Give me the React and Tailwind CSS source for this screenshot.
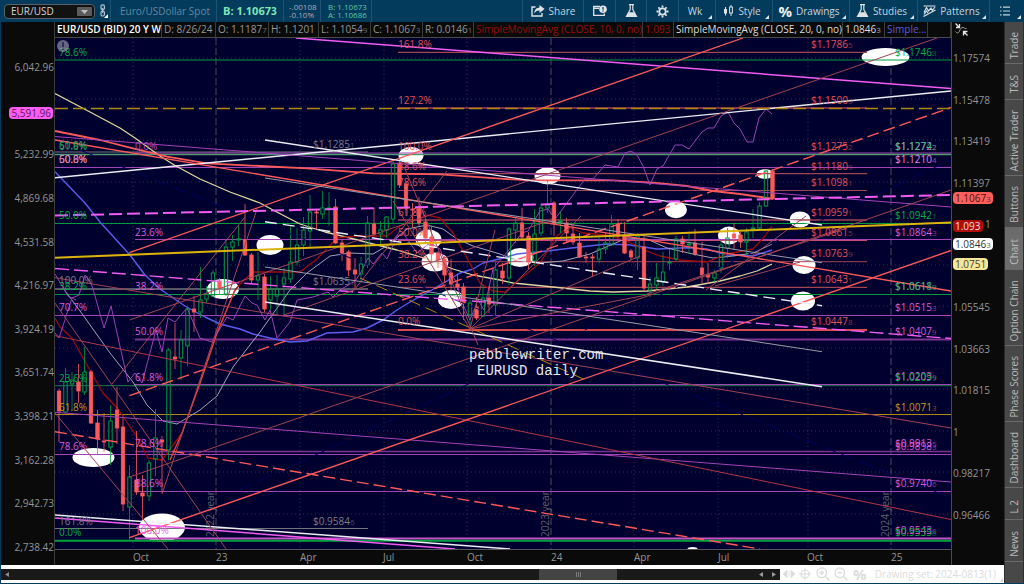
import React, { useState } from 'react';
import clsx from 'clsx';

const C = {
    mag: '#f25cf2',
    purple: '#a343b8',
    red: '#fb5a5a',
    dimRed: '#a04454',
    green: '#009a3c',
    gray: '#74747c',
    gold: '#b08a10',
    white: '#ececf4',
    navy: '#00005c',
};

// label colors, a bit brighter than the lines they belong to
const T = {
    green: '#00b040',
    mag: '#da5cde',
    red: '#e05258',
    gold: '#c09a18',
    gray: '#7c7c84',
    pink: '#ea84ea',
};

const DOT_ROWS = [58, 99, 140, 182, 223, 265, 306, 348, 389, 431, 472, 514];
const DOT_COLS = [133, 300, 384, 467, 634, 718, 808];
const YEAR_COLS = [
    { x: 216, label: '2022 year' },
    { x: 551, label: '2023 year' },
    { x: 891, label: '2024 year' },
];

// [y, x1, x2, color, width]
const LEVELS = [
    [60, 55, 951, C.green, 1],
    [152, 55, 368, C.gray, 1],
    [153, 135, 951, C.purple, 1],
    [154.5, 55, 951, '#4f9a70', 1.6],
    [167.5, 55, 951, C.purple, 1],
    [223.5, 55, 951, C.green, 1],
    [239.5, 135, 951, C.purple, 1.2],
    [289, 55, 368, C.gray, 1.4],
    [294.5, 55, 951, C.green, 1.2],
    [315.5, 55, 951, C.purple, 1],
    [339.5, 135, 951, '#7a3490', 2],
    [384.5, 135, 951, C.purple, 1],
    [385.7, 55, 951, '#1c7a4c', 1],
    [414.5, 55, 951, C.gold, 1],
    [451.5, 135, 951, '#7a3490', 1.5],
    [454.5, 55, 951, C.purple, 1],
    [491.5, 135, 951, C.purple, 1],
    [528.5, 55, 368, C.gray, 1],
    [538.5, 135, 951, '#c850cc', 2],
    [540.7, 55, 951, '#00a03c', 2],
    [52.3, 398, 867, C.dimRed, 1.2],
    [108, 398, 867, C.red, 1],
    [173.7, 398, 867, C.dimRed, 1.2],
    [190.5, 398, 867, C.dimRed, 1],
    [220, 398, 867, C.dimRed, 1.6],
    [240.5, 398, 867, '#c84a70', 1],
    [261.7, 398, 867, C.dimRed, 1],
    [287.3, 398, 867, C.dimRed, 1.2],
    [330, 398, 867, '#d84c50', 2],
];

// [x1, y1, x2, y2, color, width, dash]
const TRENDS = [
    [80, 150, 951, 498, C.navy, 1, '14 6'],
    [240, 490, 951, 160, C.navy, 1, '14 6'],
    [296, 38, 951, 88.5, C.mag, 1.5],
    [55, 177.7, 951, 91, C.white, 1.4],
    [129.5, 252.7, 743, 38, C.red, 1.3],
    [55, 140, 951, 291, C.red, 1.4],
    [55, 136.5, 951, 207, C.purple, 1],
    [55, 412.3, 951, 482, C.purple, 1],
    [55, 268.5, 951, 338.5, C.mag, 1.4, '14 5'],
    [55, 335.7, 951, 519.5, '#b03848', 1],
    [55, 277.7, 951, 428, C.dimRed, 1],
    [129.5, 395.7, 951, 107.5, C.red, 1.4, '12 5'],
    [55, 431.7, 760, 549, C.red, 1.4, '12 5'],
    [129.5, 537.7, 951, 250.5, C.red, 1.4],
    [129.5, 477, 951, 190, C.dimRed, 1],
    [129.5, 320, 937, 38, C.dimRed, 1],
    [284, 315, 545, 222, C.dimRed, 1],
    [265, 140, 822, 225, C.white, 1.3],
    [265, 221.7, 822, 305.7, C.white, 1.4, '12 6'],
    [265, 302, 822, 386.7, C.white, 1.5],
    [265, 178, 822, 262.7, '#9a9aaa', 1],
    [265, 267, 822, 351.7, '#9a9aaa', 1],
    [55, 515, 510, 549, C.white, 1.5],
    [55, 518, 455, 549, C.mag, 1.5],
    [360, 278, 590, 382, C.gold, 1, '12 6'],
    [55, 303, 226, 549, C.dimRed, 1],
    [55, 413, 168, 549, C.dimRed, 1],
    [112, 384, 245, 217, C.dimRed, 1],
    [162, 494, 257, 209, C.dimRed, 1],
    [355, 289, 447, 171, C.dimRed, 1],
    [405, 169, 478, 345, C.dimRed, 1],
    [393, 201, 470, 329, C.dimRed, 1],
    [470, 329, 495, 230, C.dimRed, 1],
    [470, 329, 581, 216, C.dimRed, 1],
    [470, 329, 640, 256, C.dimRed, 1],
    [470, 329, 652, 294, C.dimRed, 1],
    [647, 294, 847, 228, C.dimRed, 1],
    [706, 290, 806, 216, C.dimRed, 1],
    [715, 286, 800, 262, C.dimRed, 1],
    [55, 108.5, 951, 108.5, C.gold, 1.4, '13 5'],
    [55, 215.5, 951, 195, C.mag, 2, '13 5'],
    [55, 257.7, 951, 222.5, '#dcb40c', 2],
];

const CURVES = [
    { color: '#e0d6a0', width: 1.3, points: '55,93.5 90,112 120,128 135,138 160,156 175,165.5 200,179 230,192 260,203 273,210 300,224 325,232 350,238 373,244 397,250 427,259 453,269 473,275 500,280 513,283 553,287 590,291 613,292 647,291 687,287 720,281 740,276 757,271 772,264' },
    { color: '#5c5cec', width: 1.4, points: '55,171.7 85,203 100,222 130,255 145,275 160,289 185,306 205,317 220,324 240,329 253,334 270,338 290,342 307,341 327,333 353,332 367,328 383,320 397,310 410,302 430,291 447,281 460,273 473,269 483,263 500,258.7 517,254 547,251 580,247 607,244 630,245 657,249 687,247.7 707,249 727,255 740,255 753,256 772,250' },
    { color: '#fb5a5a', width: 1.8, points: '55,131 100,140 133,148.3 167,156.7 207,163.3 260,166 307,168.3 373,173.3 440,174.3 500,178.7 530,180.3 613,180.3 653,182.7 687,186 713,191 740,194 772,198.7' },
    { color: '#a3a3b5', width: 1, points: '63,288 83,315 110,353 133,382 147,405 163,421 177,424 200,410 217,396 233,367 260,332 290,290 307,273 330,256 350,253 373,254 390,244 407,229 427,225 443,229 457,239 473,246 500,254 513,259 540,263 563,261 590,254 613,244 627,238 647,239 667,248 693,254 713,258 733,256 753,253 772,244' },
    { color: '#9c0c0c', width: 1.3, points: '55,318 60,327 72,338 83,358 103,393 118,409 137,437 148,458 162,460 182,433 200,383 217,333 235,290 243,281 253,272 300,272 317,259 337,238 357,236 387,236 400,226 427,215 440,218 453,233 467,258 480,283 493,291 505,292 520,279 540,263 557,236 568,227 583,233 607,235 627,241 647,251 660,256 680,260 707,262 727,254 753,249 765,236 772,226' },
    { color: '#e04444', width: 1.3, points: '170,460 182,433 200,383 217,333 235,290' },
    { color: '#9c40b4', width: 1, points: '55,274 68,296 76,300' },
    { color: '#9c40b4', width: 1, points: '55,333 59,338 72,298 79,295 85,275 91,283 95,296 104,328 111,306 128,382 135,373 142,383 156,330 162,352 168,318 175,322 187,308 200,338 212,342 227,317 233,320 245,296 252,303 257,305 265,320 270,310 277,338 290,322 297,300 313,297 328,292 333,297 340,290 355,281 360,274 368,258 373,264 382,253 387,259 397,236 403,233 417,253 430,243 440,249 448,269 457,283 461,300 470,320 478,300 484,310 488,292 493,269 508,251 522,233 528,231 540,211 548,209 555,219 567,203 585,179 593,179 605,165 618,167 625,153 631,151 637,155 643,166 650,185 657,169 663,166 675,145 682,145 689,149 695,141 702,132 708,128 714,128 721,116 728,112 734,123 740,129 747,142 753,142 759,118 766,109 772,114' },
];

// [cx, cy, rx, ry]
const SPOTS = [
    [93.5, 457.5, 21, 9.5], [162, 527.5, 23, 14], [223, 289, 16, 10], [270, 245, 13.5, 10],
    [411, 155.5, 12.5, 8.5], [428.5, 239.5, 13, 10], [435, 262, 13.5, 9.5], [451, 299.5, 13, 9.5],
    [520, 257.5, 13.5, 9.5], [547.5, 176, 13, 8.5], [676, 209.7, 11, 8.5], [729, 235.5, 11, 9],
    [765, 174, 8.5, 4.8], [800, 219.5, 10.5, 8], [804, 265, 11.5, 9], [803, 301, 12, 9.5],
    [885.5, 57, 24, 9], [692.5, 549, 5, 2],
];

// [x, bodyTop, bodyBottom, high, low, up]
const CANDLES = [
    [59, 391, 411, 389, 442, 0], [65.5, 382, 412, 368, 413, 1], [72, 380, 384, 372, 410, 1],
    [78.5, 382, 391, 364, 403, 0], [84.5, 372, 392, 347, 395, 1], [91, 372, 423, 370, 424, 0],
    [97.5, 423, 439, 410, 454, 0], [104, 441, 442, 413, 452, 0], [110.5, 421, 447, 405, 465, 1],
    [117, 410, 428, 387, 444, 0], [123, 427, 504, 418, 511, 0], [129.5, 477, 507, 465, 541, 1],
    [136.5, 480, 492, 431, 495, 0], [142.5, 493, 496, 475, 520, 0], [149, 463, 496, 460, 501, 1],
    [155.5, 438, 459, 409, 476, 1], [162, 440, 442, 436, 493, 0], [168.5, 350, 450, 348, 460, 1],
    [175, 357, 359, 323, 369, 0], [181, 340, 358, 330, 380, 1], [187.5, 309, 346, 307, 366, 1],
    [194, 309, 312, 296, 332, 0], [200.5, 300, 312, 267, 318, 1], [206.5, 294, 299, 286, 303, 1],
    [213, 273, 296, 270, 297, 1], [219.5, 281, 288, 278, 295, 0], [226, 247, 294, 239, 296, 1],
    [232.5, 242, 247, 235, 261, 1], [238.5, 239, 240, 225, 246, 1], [245, 240, 255, 204, 256, 0],
    [251.5, 255, 280, 253, 283, 0], [258, 276, 280, 252, 300, 1], [264.5, 277, 309, 274, 312, 0],
    [270.5, 289, 300, 276, 310, 1], [277, 289, 296, 275, 315, 1], [284, 278, 284, 268, 315, 1],
    [290.5, 262, 279, 226, 283, 1], [297, 245, 262, 228, 266, 1], [303.5, 230, 245, 217, 256, 1],
    [310, 212, 231, 195, 248, 1], [316.5, 212, 213, 210, 229, 0], [322.5, 208, 214, 191, 219, 1],
    [329, 208, 209, 192, 226, 1], [335.5, 207, 243, 199, 244, 0], [342, 243, 253, 240, 261, 0],
    [348.5, 252, 270, 250, 276, 0], [355, 270, 274, 258, 289, 0], [361, 264, 274, 257, 283, 1],
    [367.5, 223, 265, 216, 268, 1], [374, 224, 234, 208, 236, 0], [380.5, 230, 234, 221, 244, 1],
    [386.5, 217, 230, 216, 238, 1], [393, 164, 219, 161, 223, 1], [399.5, 163, 185, 159, 188, 0],
    [406, 184, 208, 182, 216, 0], [412.5, 209, 210, 203, 228, 0], [419, 208, 223, 197, 226, 0],
    [425.5, 222, 238, 219, 243, 0], [431.5, 237, 254, 226, 262, 0], [438, 253, 260, 251, 268, 0],
    [444.5, 259, 275, 256, 283, 0], [451, 273, 284, 259, 291, 0], [457.5, 284, 287, 274, 290, 0],
    [463.5, 287, 303, 283, 320, 0], [470, 303, 315, 300, 329, 1], [476.5, 307, 318, 297, 320, 0],
    [483, 298, 316, 285, 317, 1], [489, 298, 304, 286, 313, 0], [495.5, 270, 305, 262, 315, 1],
    [502.5, 271, 278, 263, 284, 0], [509, 229, 278, 227, 285, 1], [515.5, 223, 230, 217, 243, 1],
    [522, 223, 237, 208, 239, 0], [528.5, 236, 262, 232, 269, 0], [534.5, 234, 261, 209, 266, 1],
    [541, 208, 233, 204, 236, 1], [547.5, 205, 208, 181, 213, 1], [554, 203, 224, 201, 236, 0],
    [560.5, 221, 222, 212, 233, 1], [566.5, 223, 233, 218, 243, 0], [573, 234, 242, 224, 245, 0],
    [579.5, 243, 257, 233, 258, 0], [586, 257, 258, 252, 263, 0], [592.5, 257, 258, 254, 277, 0],
    [599, 249, 259, 236, 263, 1], [605.5, 243, 249, 232, 254, 1], [611.5, 224, 245, 215, 246, 1],
    [618, 224, 236, 219, 238, 0], [624.5, 235, 253, 222, 254, 0], [631, 251, 257, 249, 260, 0],
    [637.5, 236, 258, 233, 270, 1], [644, 247, 288, 235, 291, 0], [650, 284, 290, 277, 297, 1],
    [656.5, 278, 285, 263, 289, 1], [663, 272, 282, 252, 286, 1], [669.5, 262, 263, 249, 270, 1],
    [676, 239, 259, 236, 261, 1], [682.5, 239, 244, 236, 253, 0], [689, 244, 245, 234, 254, 1],
    [695, 243, 254, 229, 256, 0], [702, 268, 275, 242, 283, 0], [708, 275, 277, 263, 284, 0],
    [714.5, 273, 278, 269, 282, 1], [721, 245, 268, 241, 273, 1], [727.5, 238, 248, 228, 258, 1],
    [734, 234, 238, 223, 250, 0], [740.5, 235, 242, 232, 248, 0], [746.5, 232, 242, 228, 255, 1],
    [753, 228, 229, 209, 238, 1], [759.5, 206, 228, 202, 231, 1], [766, 171, 206, 170, 207, 1],
    [772.5, 171, 199, 169, 200, 0],
];

// [x, y, color, text, small last digit]
const LABELS = [
    [59, 56, T.green, '78.6%'],
    [59, 149, T.gray, '50.0%'],
    [59, 150, T.green, '61.8%'],
    [59, 163, T.gold, '50.0%'],
    [59, 163, T.pink, '60.8%'],
    [59, 219, T.green, '50.0%'],
    [59, 284, T.gray, '100.0%'],
    [59, 290, T.green, '38.2%'],
    [59, 311, T.mag, '70.7%'],
    [59, 382, T.green, '23.6%'],
    [59, 411, T.gold, '61.8%'],
    [59, 450, T.mag, '78.6%'],
    [59, 525, T.gray, '161.8%'],
    [59, 536, T.green, '0.0%'],
    [135, 150, '#b84ec2', '0.0%'],
    [135, 236, T.mag, '23.6%'],
    [135, 290, T.mag, '38.2%'],
    [135, 335, T.mag, '50.0%'],
    [135, 381, T.mag, '61.8%'],
    [135, 447, T.mag, '78.6%'],
    [135, 487, T.mag, '88.6%'],
    [135, 534, C.mag, '100.0%'],
    [398, 48, T.red, '161.8%'],
    [398, 104, T.red, '127.2%'],
    [398, 150, T.red, '100.0%'],
    [398, 170, T.red, '88.6%'],
    [398, 186, T.red, '78.6%'],
    [398, 216, T.red, '61.8%'],
    [398, 236, T.red, '50.0%'],
    [398, 258, T.red, '38.2%'],
    [398, 283, T.red, '23.6%'],
    [398, 325, T.red, '0.0%'],
    [811, 48, T.red, '$1.1786', '5'],
    [811, 104, T.red, '$1.1500', '9'],
    [811, 150, T.red, '$1.1275', '2'],
    [811, 170, T.red, '$1.1180', '9'],
    [811, 186, T.red, '$1.1098', '1'],
    [811, 216, T.red, '$1.0959', '1'],
    [811, 236, T.red, '$1.0861', '5'],
    [811, 257, T.red, '$1.0763', '9'],
    [811, 283, T.red, '$1.0643', '1'],
    [811, 325, T.red, '$1.0447', '8'],
    [895, 56, T.green, '$1.1746', '8'],
    [895, 150, T.mag, '$1.1272', '2'],
    [895, 150, '#3cc070', '$1.1274', '2'],
    [895, 163, T.pink, '$1.1210', '4'],
    [895, 219, T.green, '$1.0942', '1'],
    [895, 236, T.mag, '$1.0864', '3'],
    [895, 290, T.gray, '$1.0611', '9'],
    [895, 290, '#3cb068', '$1.0618', '9'],
    [895, 311, T.mag, '$1.0515', '3'],
    [895, 335, T.mag, '$1.0407', '9'],
    [895, 380, T.mag, '$1.0203', '9'],
    [895, 381, T.green, '$1.0209', '9'],
    [895, 411, T.gold, '$1.0071', '3'],
    [895, 447, T.mag, '$0.9913', '5'],
    [895, 450, T.mag, '$0.9898', '3'],
    [895, 487, T.mag, '$0.9740', '6'],
    [895, 534, T.mag, '$0.9543', '6'],
    [895, 536, T.green, '$0.9535', '6'],
    [313, 148, T.gray, '$1.1285', '1'],
    [313, 285, T.gray, '$1.0635', '1'],
    [313, 525, T.gray, '$0.9584', '6'],
];

const LEFT_AXIS = ['6,042.96', '', '5,232.99', '4,869.68', '4,531.58', '4,216.97', '3,924.19', '3,651.74', '3,398.21', '3,162.28', '2,942.73', '2,738.42'];
const RIGHT_AXIS = ['1.17574', '1.15478', '1.13419', '1.11397', '', '', '1.05545', '1.03663', '1.01815', '1', '0.98217', '0.96466'];
const TIME_AXIS = ['', 'Oct', '23', 'Apr', 'Jul', 'Oct', '24', 'Apr', 'Jul', 'Oct', '25'];

const SIDE_TABS = [
    { label: 'Trade', size: 'h-[42px]' },
    { label: 'T&S', size: 'h-[36px]' },
    { label: 'Active Trader', size: 'h-[76px]' },
    { label: 'Buttons', size: 'h-[52px]' },
    { label: 'Chart', size: 'h-[42px]' },
    { label: 'Option Chain', size: 'h-[76px]' },
    { label: 'Phase Scores', size: 'h-[76px]' },
    { label: 'Dashboard', size: 'h-[66px]' },
    { label: 'L 2', size: 'h-[32px]' },
    { label: 'News', size: 'h-[42px]' },
];

const READOUT = [
    { text: 'EUR/USD (BID) 20 Y W', style: 'font-semibold text-white' },
    { text: 'D: 8/26/24', style: 'text-[#969696]' },
    { text: 'O: 1.1187', tail: '7', style: 'text-[#969696]' },
    { text: 'H: 1.1201', style: 'text-[#969696]' },
    { text: 'L: 1.1054', tail: '9', style: 'text-[#969696]' },
    { text: 'C: 1.1067', tail: '3', style: 'text-[#969696]' },
    { text: 'R: 0.0146', tail: '1', style: 'text-[#969696]' },
    { text: 'SimpleMovingAvg (CLOSE, 10, 0, no)', style: 'text-[#9a0c0c]' },
    { text: '1.093', style: 'text-[#9a0c0c]' },
    { text: 'SimpleMovingAvg (CLOSE, 20, 0, no)', style: 'text-[#dcdcdc]' },
    { text: '1.0846', tail: '3', style: 'text-[#dcdcdc]' },
    { text: 'Simple...', style: 'text-[#5c5cdc]' },
    { text: '' },
];

const Corner = () => (
    <svg className="absolute right-[3px] bottom-[3px] w-1 h-1" viewBox="0 0 4 4">
        <path d="M4 0v4H0z" fill="#e4e4e4" />
    </svg>
);

const FlaskIcon = () => (
    <svg className="w-[13px] h-[14px] shrink-0" viewBox="0 0 13 14">
        <path d="M4 .7h5M5.2 1v4.6L1.5 12.3h10L7.8 5.6V1" fill="none" stroke="#dfe3e6" strokeWidth="1.2" />
        <path d="M4 8.2h5l2.8 4.6H1.2z" fill="#dfe3e6" />
    </svg>
);

const ShareIcon = () => (
    <svg className="w-[14px] h-3 shrink-0" viewBox="0 0 14 12">
        <path d="M4.5 2H1v9h10V8" fill="none" stroke="#dfe3e6" strokeWidth="1.4" />
        <path d="M8.5 0 13.6 4 8.5 8V5.6C6 5.5 4.5 6.4 3 8.6 3.4 5 5.2 2.6 8.5 2.4z" fill="#dfe3e6" />
    </svg>
);

const AlertCardIcon = () => (
    <svg className="w-[14px] h-3 shrink-0" viewBox="0 0 14 12">
        <path d="M7 1.5H.7v8.8h10.6V8.5M.7 3.3H6" fill="none" stroke="#dfe3e6" strokeWidth="1.3" />
        <circle cx="10" cy="4.2" r="3.8" fill="#dfe3e6" />
        <path d="M10 2v2.8M10 5.5v1" stroke="#033b5c" strokeWidth="1.2" />
    </svg>
);

const GearIcon = () => (
    <svg className="w-[13px] h-[13px] shrink-0" viewBox="0 0 13 13">
        <circle cx="6.5" cy="6.5" r="3.2" fill="none" stroke="#dfe3e6" strokeWidth="1.8" />
        <path d="M6.5.5v2M6.5 10.5v2M.5 6.5h2M10.5 6.5h2M2.3 2.3l1.4 1.4M9.3 9.3l1.4 1.4M2.3 10.7l1.4-1.4M9.3 3.7l1.4-1.4" stroke="#dfe3e6" strokeWidth="1.8" />
    </svg>
);

const CandleIcon = () => (
    <svg className="w-[11px] h-3 shrink-0" viewBox="0 0 11 12">
        <path d="M2.5 2v8.5M8 0v2M8 8v3" stroke="#dfe3e6" strokeWidth="1" />
        <rect x="1" y="4" width="3" height="4.5" fill="#dfe3e6" />
        <rect x="6.6" y="2" width="2.8" height="6" fill="none" stroke="#dfe3e6" />
    </svg>
);

const PatternIcon = () => (
    <svg className="w-[13px] h-3 shrink-0" viewBox="0 0 13 12">
        <path d="M.5 1h12M.5 11.5 12.5 5" fill="none" stroke="#dfe3e6" strokeWidth="1.2" />
        <path d="M1 7.5 3.5 2.5 5.5 6 8 3l1.2 2.5L12 2M1 9.500 3.500 6l1.500 2" fill="none" stroke="#dfe3e6" strokeWidth="1.2" />
    </svg>
);

const ListIcon = () => (
    <svg className="w-[10px] h-[10px] shrink-0" viewBox="0 0 10 10">
        <path d="M0 1.2h1.5M0 5h1.5M0 8.8h1.5M3 1.2h7M3 5h7M3 8.8h7" stroke="#c8d4dc" strokeWidth="1.2" />
    </svg>
);

const PercentMark = () => <span className="text-[15px] font-bold text-[#f0f0f0]">%</span>;

const TOOLS = [
    { name: 'Share', width: 'w-[61px]', icon: ShareIcon, text: 'Share' },
    { name: 'Alerts', width: 'w-[32px]', icon: AlertCardIcon },
    { name: 'Quick studies', width: 'w-[31px]', icon: FlaskIcon },
    { name: 'Settings', width: 'w-[32px]', icon: GearIcon },
    { name: 'Timeframe', width: 'w-[37px]', text: 'Wk', menu: true },
    { name: 'Style', width: 'w-[57px]', icon: CandleIcon, text: 'Style', menu: true },
    { name: 'Drawings', width: 'w-[77px]', icon: PercentMark, text: 'Drawings', menu: true },
    { name: 'Studies', width: 'w-[68px]', icon: FlaskIcon, text: 'Studies', menu: true },
    { name: 'Patterns', width: 'w-[72px]', icon: PatternIcon, text: 'Patterns', menu: true },
    { name: 'Menu', width: 'w-[35px]', icon: ListIcon, menu: true },
];

const Toolbar = () => {
    const [symbol, setSymbol] = useState('EUR/USD');

    return (
        <header className="flex items-stretch h-[22px] bg-[#033b5c] whitespace-nowrap">
            <div className="flex items-center gap-1 w-[111px] pl-1 border-r border-[#1d5273] shrink-0">
                <div className="relative w-[91px]">
                    <select
                        aria-label="Symbol"
                        value={symbol}
                        onChange={(e) => setSymbol(e.target.value)}
                        className="block w-full h-[15px] appearance-none bg-[#121212] border border-[#55626a] rounded-sm pl-1.5 text-[10px] leading-[13px] text-[#d4d4d4] outline-none"
                    >
                        <option>EUR/USD</option>
                    </select>
                    <svg className="absolute right-[3px] top-[3px] w-[15px] h-[9px] pointer-events-none" viewBox="0 0 15 9">
                        <rect width="15" height="9" rx="1" fill="#5c5c5c" />
                        <path d="M4 3h7L7.5 7z" fill="#c0c0c0" />
                    </svg>
                </div>
                <button aria-label="Link symbol">
                    <svg className="w-[9px] h-[14px]" viewBox="0 0 9 14">
                        <rect x="2" y=".8" width="3.4" height="5" rx="1.5" fill="none" stroke="#b4c4ce" strokeWidth="1.2" />
                        <rect x="2" y="7" width="3.4" height="5" rx="1.5" fill="none" stroke="#b4c4ce" strokeWidth="1.2" />
                        <path d="M3.7 4v5" stroke="#b4c4ce" strokeWidth="1.2" />
                        <path d="M9 10v4H5z" fill="#fff" />
                    </svg>
                </button>
            </div>
            <div className="flex items-center w-[106px] pl-[9px] border-r border-[#1d5273] text-[10px] text-[#6788a0]">Euro/USDollar Spot</div>
            <div className="flex items-center w-[67px] pl-1.5 border-r border-[#1d5273] text-[11px] font-bold text-[#7ee8b4]">
                B: 1.1067<span className="text-[10px]">3</span>
            </div>
            <div className="flex flex-col justify-center w-[37px] pl-[5px] border-r border-[#1d5273] text-[8px] leading-2 text-[#b4a8b4]">
                <span>-.00108</span>
                <span>-0.10%</span>
            </div>
            <div className="flex flex-col justify-center w-[51px] pl-[7px] border-r border-[#1d5273] text-[8px] leading-2 text-[#5cc8a4]">
                <span>B: 1.10673</span>
                <span>A: 1.10686</span>
            </div>
            <div className="flex ml-auto">
                {TOOLS.map(({ name, width, icon: Icon, text, menu }) => (
                    <button
                        key={name}
                        aria-label={name}
                        className={clsx('relative flex items-center justify-center gap-1 border-l border-[#1d5273] text-[10px] text-[#c8d4dc]', width, menu && 'pr-1')}
                    >
                        {Icon && <Icon />}
                        {text}
                        {menu && <Corner />}
                    </button>
                ))}
            </div>
        </header>
    );
};

const Readout = () => (
    <div className="grid grid-cols-[107fr_54fr_53fr_50fr_52fr_52fr_51fr_169fr_31fr_169fr_42fr_43fr_23fr] h-4 bg-[#0a0a0a] border-b border-[#4a4a4a] text-[10px] leading-[15px] whitespace-nowrap">
        {READOUT.map((cell) => (
            <div key={cell.text} className={clsx('min-w-0 pl-0.5 border-r border-[#3c3c3c]', cell.style)}>
                {cell.text}
                {cell.tail && <span className="text-[8px] opacity-70">{cell.tail}</span>}
            </div>
        ))}
    </div>
);

const Plot = () => (
    <svg className="block w-full h-auto bg-[#00002e]" viewBox="55 38 896 512" role="img" aria-label="EUR/USD daily chart">
        {DOT_ROWS.map((y) => (
            <line key={y} x1="55" x2="951" y1={y} y2={y} stroke="#32324e" strokeDasharray="1 3" />
        ))}
        {DOT_COLS.map((x) => (
            <line key={x} x1={x} x2={x} y1="38" y2="549" stroke="#32324e" strokeDasharray="1 3" />
        ))}
        {YEAR_COLS.map(({ x, label }) => (
            <g key={x}>
                <line x1={x} x2={x} y1="38" y2="549" stroke="#4a4a5c" strokeDasharray="7 3" />
                <text transform={`translate(${x - 2} 537) rotate(-90)`} fontSize="10" fill="#60606a">{label}</text>
            </g>
        ))}

        {SPOTS.map(([cx, cy, rx, ry]) => (
            <ellipse key={`${cx}-${cy}`} cx={cx} cy={cy} rx={rx} ry={ry} fill="#fff" />
        ))}

        {LEVELS.map(([y, x1, x2, color, width], i) => (
            <line key={i} x1={x1} x2={x2} y1={y} y2={y} stroke={color} strokeWidth={width} />
        ))}
        {CURVES.map(({ color, width, points }, i) => (
            <polyline key={i} points={points} fill="none" stroke={color} strokeWidth={width} strokeLinejoin="round" />
        ))}

        {CANDLES.map(([x, top, bottom, high, low, up]) => (
            <g key={x} stroke={up ? C.green : C.red}>
                <path d={`M${x} ${high}V${top}M${x} ${bottom}V${low}`} strokeWidth="1" opacity="0.8" />
                <rect
                    x={x - 1.7}
                    y={top}
                    width="3.4"
                    height={bottom - top}
                    fill={up ? 'none' : C.red}
                    strokeWidth={up ? 1 : 0.8}
                />
            </g>
        ))}

        {TRENDS.map(([x1, y1, x2, y2, color, width, dash], i) => (
            <line key={i} x1={x1} y1={y1} x2={x2} y2={y2} stroke={color} strokeWidth={width} strokeDasharray={dash} />
        ))}

        {LABELS.map(([x, y, color, text, tail], i) => (
            <text key={i} x={x} y={y} fontSize="10" fill={color}>
                {text}
                {tail && <tspan fontSize="8" opacity="0.6">{tail}</tspan>}
            </text>
        ))}

        <circle cx="63" cy="46" r="6" fill="#a8a8bc" opacity="0.6" />
        <path d="M63 42v5M63 48.5v1.5" stroke="#20204a" strokeWidth="1.5" />

        <g className="font-['Liberation_Mono',monospace]" fontSize="14" fill="#e6e6ee">
            <text x="469" y="359">pebblewriter.com</text>
            <text x="477" y="375">EURUSD daily</text>
        </g>
        <path d="M55 549.5h896" stroke="#55555c" />
    </svg>
);

const PriceTag = ({ className, children, tail }) => (
    <span className={clsx('absolute h-3 px-[2px] rounded-sm text-[10px] leading-3', className)}>
        {children}
        {tail && <span className="text-[8px] opacity-80">{tail}</span>}
    </span>
);

const LeftAxis = () => (
    <div className="relative flex flex-col justify-between items-end w-[54px] shrink-0 pt-[37px] pb-[10px] bg-[#0a0a0a] border-r border-[#3c3c3c] text-[10px] leading-4 text-[#949494]">
        {LEFT_AXIS.map((value, i) => (
            <span key={i} className="h-4">{value}</span>
        ))}
        <PriceTag className="top-[85px] right-px bg-[#ff5cf4] text-[#5a1a5a]">5,591.96</PriceTag>
    </div>
);

const RightAxis = () => (
    <div className="relative flex flex-col justify-between w-[53px] shrink-0 pt-[28px] pb-[42px] pl-px bg-[#0a0a0a] border-l border-[#4a4a4a] text-[10px] leading-4 text-[#949494]">
        {RIGHT_AXIS.map((value, i) => (
            <span key={i} className="h-4">{value}</span>
        ))}
        <button aria-label="Collapse axis" className="absolute top-px left-[3px]">
            <svg className="block w-[13px] h-[13px]" viewBox="0 0 13 13">
                <path d="M.5.5l3.500 3.500M4.500 1v3.500H1M12.500 12.500 9 9M8.500 12.500V8.500h4" fill="none" stroke="#e6e6e6" strokeWidth="1.3" />
                <path d="M.5 8.500c1.500 2 3 2 4-.5s2-3.500 3.500-3.500 1.500 1.500 3.500 1" fill="none" stroke="#a0a0a0" />
            </svg>
        </button>
        <PriceTag className="top-[170px] left-px bg-[#ff5f5a] text-[#4a1010]" tail="3">1.1067</PriceTag>
        <PriceTag className="top-[198px] left-px bg-[#b00c0c] text-[#f4dede]">1.093</PriceTag>
        <span className="absolute top-[194px] left-[33px]">1</span>
        <PriceTag className="top-[216px] left-px bg-white text-[#333]" tail="3">1.0846</PriceTag>
        <PriceTag className="top-[236px] left-px bg-[#f6e69a] text-[#4a4420]">1.0751</PriceTag>
    </div>
);

const TimeAxis = () => (
    <div className="grid grid-cols-[78fr_83fr_84fr_83fr_84fr_84fr_83fr_84fr_89fr_84fr_60fr] h-[15px] bg-[#0a0a0a] text-[10px] leading-[15px] text-[#949494]">
        {TIME_AXIS.map((label, i) => (
            <span key={i}>{label}</span>
        ))}
    </div>
);

const BottomBar = () => (
    <footer className="flex items-center h-[18px] bg-white">
        <div className="flex flex-1 items-center h-[11px] bg-[#191919]">
            <button aria-label="Scroll left" className="pl-1">
                <svg className="w-[4px] h-[5px]" viewBox="0 0 4 5"><path d="M4 0v5L0 2.5z" fill="#8a8a8a" /></svg>
            </button>
            <div className="flex flex-1 h-full">
                <div className="flex-[530]" />
                <div className="flex flex-[78] items-center justify-center bg-[#444]">
                    <svg className="w-[5px] h-[5px]" viewBox="0 0 5 5"><path d="M.5 0v5M2.5 0v5M4.5 0v5" stroke="#7c7c7c" /></svg>
                </div>
                <div className="flex-[142]" />
            </div>
            <button aria-label="Step left" className="pr-[9px]">
                <svg className="w-[4px] h-[5px]" viewBox="0 0 4 5"><path d="M4 0v5L0 2.5z" fill="#9a9a9a" /></svg>
            </button>
            <button aria-label="Step right" className="pr-1">
                <svg className="w-[4px] h-[5px]" viewBox="0 0 4 5"><path d="M0 0v5l4-2.5z" fill="#9a9a9a" /></svg>
            </button>
        </div>
        <div className="relative flex items-center justify-between w-[224px] shrink-0 pl-[3px] pr-2 text-[#dcdcdc]">
            <button aria-label="Pan">
                <svg className="w-3 h-2" viewBox="0 0 12 8"><path d="M0 4l4-4v8zM12 4L8 0v8zM5.3 1v6M6.7 1v6" fill="currentColor" stroke="currentColor" strokeWidth=".5" /></svg>
            </button>
            <button aria-label="Crosshair">
                <svg className="w-3 h-3" viewBox="0 0 12 12"><path d="M6 0v12M0 6h12" stroke="currentColor" /><circle cx="6" cy="6" r="4" fill="none" stroke="currentColor" strokeWidth="1.2" /></svg>
            </button>
            <button aria-label="Zoom in">
                <svg className="w-[14px] h-[14px]" viewBox="0 0 14 14"><circle cx="5.8" cy="5.8" r="4.8" fill="none" stroke="currentColor" strokeWidth="1.3" /><path d="M9.3 9.3l4.2 4.2M3.5 5.8h4.6M5.8 3.5v4.6" stroke="currentColor" strokeWidth="1.5" /></svg>
            </button>
            <button aria-label="Zoom out">
                <svg className="w-[14px] h-[14px]" viewBox="0 0 14 14"><circle cx="5.8" cy="5.8" r="4.8" fill="none" stroke="currentColor" strokeWidth="1.3" /><path d="M9.3 9.3l4.2 4.2M3.5 5.8h4.6" stroke="currentColor" strokeWidth="1.5" /></svg>
            </button>
            <button aria-label="Percent scale" className="text-[15px] leading-4 font-bold">%</button>
            <span className="pl-1 text-[10px] whitespace-nowrap">Drawing set: 2024-0813(1)</span>
            <svg className="absolute right-px bottom-0 w-1 h-1" viewBox="0 0 4 4"><path d="M4 0v4H0z" fill="currentColor" /></svg>
        </div>
    </footer>
);

const SideTabs = () => {
    const [active, setActive] = useState('Chart');

    return (
        <nav className="flex flex-col w-[19px] shrink-0 bg-[#484848] border-l border-[#2c2c2c]">
            {SIDE_TABS.map(({ label, size }) => (
                <button
                    key={label}
                    onClick={() => setActive(label)}
                    className={clsx(
                        'flex items-center justify-center pt-1.5 border-b border-[#6a6a6a] text-[10px] text-[#bcbcbc] whitespace-nowrap',
                        size,
                        active === label && 'bg-[#6c6c6c]'
                    )}
                >
                    <span className="rotate-180 [writing-mode:vertical-rl]">{label}</span>
                </button>
            ))}
        </nav>
    );
};

const App = () => (
    <div className="min-h-screen flex flex-col bg-[#033b5c] font-['Open_Sans','Noto_Sans',sans-serif]">
        <Toolbar />
        <div className="flex flex-1 px-px pb-px">
            <main className="flex-1 min-w-0">
                <div className="flex">
                    <LeftAxis />
                    <section className="flex-1 min-w-0">
                        <Readout />
                        <Plot />
                        <TimeAxis />
                    </section>
                    <RightAxis />
                </div>
                <BottomBar />
            </main>
            <SideTabs />
        </div>
    </div>
);

export default App;
